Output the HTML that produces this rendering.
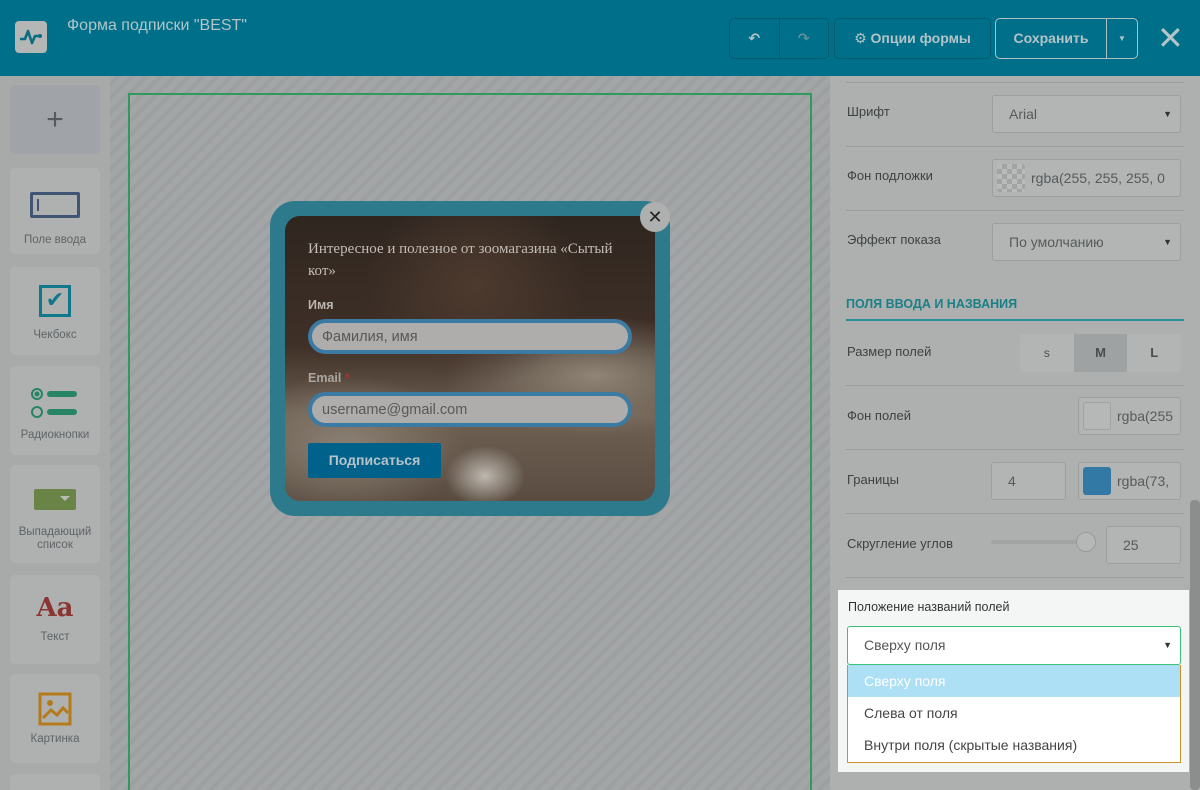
<!DOCTYPE html>
<html><head><meta charset="utf-8"><style>
*{box-sizing:border-box;margin:0;padding:0}
html,body{width:1200px;height:790px;overflow:hidden}
body{font-family:"Liberation Sans","DejaVu Sans",sans-serif;background:#a9abab;position:relative}
.hdr{position:absolute;left:0;top:0;width:1200px;height:76px;background:#00708a}
.logo{position:absolute;left:15px;top:21px;width:32px;height:32px;background:#b5b7b7;border-radius:4px}
.title{position:absolute;left:67px;top:17px;font-size:16px;color:#b1c4c8}
.btn{position:absolute;top:18px;height:41px;border:1px solid #045c6e;border-radius:5px;color:#b3c3c7;font-weight:bold;font-size:14px;display:flex;align-items:center;justify-content:center}
.side{position:absolute;left:0;top:76px;width:110px;height:714px;background:#a8aaaa}
.card{position:absolute;left:10px;width:90px;background:#afb1b1;border-radius:5px;text-align:center;font-size:11.5px;color:#5f6466}
.canvas{position:absolute;left:110px;top:76px;width:720px;height:714px;background:repeating-linear-gradient(-45deg,#a3a6a6 0 6px,#9d9fa0 6px 10px)}
.frame{position:absolute;left:128px;top:93px;width:684px;height:710px;border:2px solid #2e9a5e}
.panel{position:absolute;left:830px;top:76px;width:370px;height:714px;background:#aeb0af;overflow:hidden}
.ln{position:absolute;left:16px;width:338px;height:1px;background:#9a9d9d}
.lbl{position:absolute;left:17px;font-size:13px;color:#3d4243}
.inp{position:absolute;background:#b3b5b4;border:1px solid #9d9f9f;border-radius:3px;font-size:14px;color:#565a5b;display:flex;align-items:center;padding-left:16px}
.arr{position:absolute;right:8px;font-size:9px;color:#333}
</style></head><body>
<div class="hdr">
 <div class="logo"><svg width="32" height="32" viewBox="0 0 32 32"><path d="M5 18h5l3-8 4 12 3-7h4" stroke="#0b6d82" stroke-width="2.6" fill="none" stroke-linejoin="round"/><circle cx="25" cy="15" r="2" fill="#0b6d82"/></svg></div>
 <div class="title">Форма подписки "BEST"</div>
 <div class="btn" style="left:729px;width:100px;padding:0"><span style="flex:1;text-align:center;border-right:1px solid #045c6e;line-height:39px">↶</span><span style="flex:1;text-align:center;color:#5f8f9a;line-height:39px">↷</span></div>
 <div class="btn" style="left:834px;width:157px">⚙ Опции формы</div>
 <div class="btn" style="left:995px;width:143px;border-color:#aebfc2;justify-content:flex-start"><span style="width:111px;text-align:center;border-right:1px solid #aebfc2;line-height:39px">Сохранить</span><span style="flex:1;text-align:center;font-size:8px">▼</span></div>
 <div style="position:absolute;left:1157px;top:22px;font-size:32px;color:#b5c4c8;line-height:32px">✕</div>
</div>
<div class="side">
 <div class="card" style="top:9px;height:69px;background:#a0a3a7"><div style="font-size:30px;color:#545a5e;line-height:69px">+</div></div>
 <div class="card" style="top:92px;height:86px"><div style="margin:24px auto 0;width:50px;height:26px;border:3px solid #3f5573;border-radius:2px;position:relative"><div style="position:absolute;left:4px;top:4px;width:2px;height:12px;background:#3f5573"></div></div><div style="margin-top:16px">Поле ввода</div></div>
 <div class="card" style="top:191px;height:88px"><div style="margin:18px auto 0;width:32px;height:32px;border:3px solid #10788a;font-size:22px;line-height:24px;color:#10788a;font-weight:bold">✔</div><div style="margin-top:12px">Чекбокс</div></div>
 <div class="card" style="top:290px;height:89px"><svg width="50" height="34" style="margin-top:20px" viewBox="0 0 50 34"><circle cx="7" cy="8" r="5" fill="none" stroke="#278464" stroke-width="2"/><circle cx="7" cy="8" r="2.5" fill="#278464"/><circle cx="7" cy="26" r="5" fill="none" stroke="#278464" stroke-width="2"/><rect x="17" y="5" width="30" height="6" rx="3" fill="#278464"/><rect x="17" y="23" width="30" height="6" rx="3" fill="#278464"/></svg><div style="margin-top:6px">Радиокнопки</div></div>
 <div class="card" style="top:389px;height:98px"><div style="margin:24px auto 0;width:42px;height:21px;background:#6a8448;border-radius:2px;position:relative"><div style="position:absolute;right:6px;top:7px;border:5px solid transparent;border-top:5px solid #b8bcb4"></div></div><div style="margin-top:16px;line-height:13px">Выпадающий<br>список</div></div>
 <div class="card" style="top:499px;height:89px"><div style="margin-top:18px;font-family:'DejaVu Serif',serif;font-weight:bold;font-size:26px;color:#8b3533">Aa</div><div style="margin-top:8px">Текст</div></div>
 <div class="card" style="top:598px;height:89px"><svg width="34" height="34" style="margin-top:18px" viewBox="0 0 34 34"><rect x="2" y="2" width="30" height="30" fill="none" stroke="#b57a1c" stroke-width="3"/><circle cx="12" cy="11" r="3" fill="#b57a1c"/><path d="M5 26l8-8 6 5 6-7 5 5" fill="none" stroke="#b57a1c" stroke-width="3"/></svg><div style="margin-top:4px">Картинка</div></div>
 <div class="card" style="top:698px;height:30px"></div>
</div>
<div class="canvas"></div>
<div class="frame"></div>
<div style="position:absolute;left:270px;top:201px;width:400px;height:315px;background:#2c7a8c;border-radius:25px"></div>
<div style="position:absolute;left:285px;top:216px;width:370px;height:285px;border-radius:15px;overflow:hidden;background:radial-gradient(ellipse 110px 100px at 190px 70px,#4d3a2e,transparent),radial-gradient(ellipse 150px 60px at 310px 160px,#8f8476,transparent),radial-gradient(ellipse 120px 70px at 60px 230px,#8a8073,transparent),radial-gradient(ellipse 40px 30px at 200px 260px,#bdb8b0,transparent),linear-gradient(#2f2620,#3f3027 45%,#6e6053 70%,#5a4c40)">
 <div style="position:absolute;left:23px;top:22px;width:325px;font-family:'Liberation Serif',serif;font-size:15px;line-height:22px;color:#c3bdb5">Интересное и полезное от зоомагазина «Сытый кот»</div>
 <div style="position:absolute;left:23px;top:82px;font-size:12.5px;font-weight:bold;color:#bcb6ae">Имя</div>
 <div style="position:absolute;left:23px;top:103px;width:324px;height:35px;border:4px solid #3a7aa3;border-radius:18px;background:#aeadac;color:#585858;font-size:14.5px;padding-left:10px;line-height:28px">Фамилия, имя</div>
 <div style="position:absolute;left:23px;top:155px;font-size:12.5px;font-weight:bold;color:#aca6a0">Email <span style="color:#a33">*</span></div>
 <div style="position:absolute;left:23px;top:176px;width:324px;height:35px;border:4px solid #3a7aa3;border-radius:18px;background:#aeadac;color:#585858;font-size:14.5px;padding-left:10px;line-height:28px">username@gmail.com</div>
 <div style="position:absolute;left:23px;top:227px;width:133px;height:35px;background:#00628a;border-radius:2px;color:#b7c3c8;font-weight:bold;font-size:14px;text-align:center;line-height:35px">Подписаться</div>
</div>
<div style="position:absolute;left:640px;top:202px;width:30px;height:30px;border-radius:50%;background:#aeb0b0;text-align:center;line-height:30px;font-size:18px;color:#222">✕</div>
<div class="panel">
 <div class="ln" style="top:6px"></div>
 <div class="lbl" style="top:28px">Шрифт</div>
 <div class="inp" style="left:162px;top:19px;width:189px;height:38px">Arial<span class="arr">▼</span></div>
 <div class="ln" style="top:70px"></div>
 <div class="lbl" style="top:92px">Фон подложки</div>
 <div class="inp" style="left:162px;top:83px;width:189px;height:38px;padding-left:38px;overflow:hidden;white-space:nowrap"><div style="position:absolute;left:4px;top:4px;width:28px;height:28px;border-radius:3px;background:repeating-conic-gradient(#a2a4a4 0 25%,#b9bbbb 0 50%) 0 0/10px 10px"></div>rgba(255, 255, 255, 0</div>
 <div class="ln" style="top:134px"></div>
 <div class="lbl" style="top:156px">Эффект показа</div>
 <div class="inp" style="left:162px;top:147px;width:189px;height:38px">По умолчанию<span class="arr">▼</span></div>
 <div style="position:absolute;left:16px;top:221px;font-size:12.5px;font-weight:bold;color:#1b7f88">ПОЛЯ ВВОДА И НАЗВАНИЯ</div>
 <div style="position:absolute;left:16px;top:243px;width:338px;height:2px;background:#2a9098"></div>
 <div class="lbl" style="top:268px">Размер полей</div>
 <div style="position:absolute;left:190px;top:258px;width:161px;height:38px;display:flex;border-radius:3px;overflow:hidden;font-size:13px;font-weight:bold;color:#4a4e4f;background:#b3b5b4"><div style="flex:1;text-align:center;line-height:38px;font-weight:normal;font-size:12px">s</div><div style="flex:1;text-align:center;line-height:38px;background:#9ea2a2">M</div><div style="flex:1;text-align:center;line-height:38px">L</div></div>
 <div class="ln" style="top:309px"></div>
 <div class="lbl" style="top:332px">Фон полей</div>
 <div class="inp" style="left:248px;top:321px;width:103px;height:38px;padding-left:38px;overflow:hidden"><div style="position:absolute;left:4px;top:4px;width:28px;height:28px;border-radius:3px;background:#b6b8b7;border:1px solid #a0a2a2"></div>rgba(255</div>
 <div class="ln" style="top:373px"></div>
 <div class="lbl" style="top:396px">Границы</div>
 <div class="inp" style="left:161px;top:386px;width:75px;height:38px">4</div>
 <div class="inp" style="left:248px;top:386px;width:103px;height:38px;padding-left:38px;overflow:hidden;white-space:nowrap"><div style="position:absolute;left:4px;top:4px;width:28px;height:28px;border-radius:3px;background:#3379a6"></div>rgba(73,</div>
 <div class="ln" style="top:437px"></div>
 <div class="lbl" style="top:460px">Скругление углов</div>
 <div style="position:absolute;left:161px;top:464px;width:100px;height:4px;border-radius:2px;background:#a2a4a4"></div>
 <div style="position:absolute;left:246px;top:456px;width:20px;height:20px;border-radius:50%;background:#b6b8b7;border:1px solid #999"></div>
 <div class="inp" style="left:276px;top:450px;width:75px;height:38px">25</div>
 <div class="ln" style="top:501px"></div>
 <div style="position:absolute;left:360px;top:424px;width:10px;height:290px;background:#8c8e8e;border-radius:4px"></div>
</div>
<div style="position:absolute;left:838px;top:590px;width:351px;height:182px;background:#f4f6f6">
 <div style="position:absolute;left:10px;top:10px;font-size:12.5px;color:#333">Положение названий полей</div>
 <div style="position:absolute;left:9px;top:36px;width:334px;height:39px;border:1px solid #3cc07a;border-radius:3px;background:#fff;font-size:14px;color:#555;line-height:37px;padding-left:16px">Сверху поля<span style="position:absolute;right:8px;font-size:9px;color:#333">▼</span></div>
 <div style="position:absolute;left:9px;top:75px;width:334px;height:98px;border:1px solid #c9922a;border-top:none;background:#fff;font-size:14px;color:#444">
  <div style="height:32px;background:#aee0f5;color:#fff;line-height:32px;padding-left:16px">Сверху поля</div>
  <div style="height:32px;line-height:32px;padding-left:16px">Слева от поля</div>
  <div style="height:32px;line-height:32px;padding-left:16px">Внутри поля (скрытые названия)</div>
 </div>
</div>
</body></html>
